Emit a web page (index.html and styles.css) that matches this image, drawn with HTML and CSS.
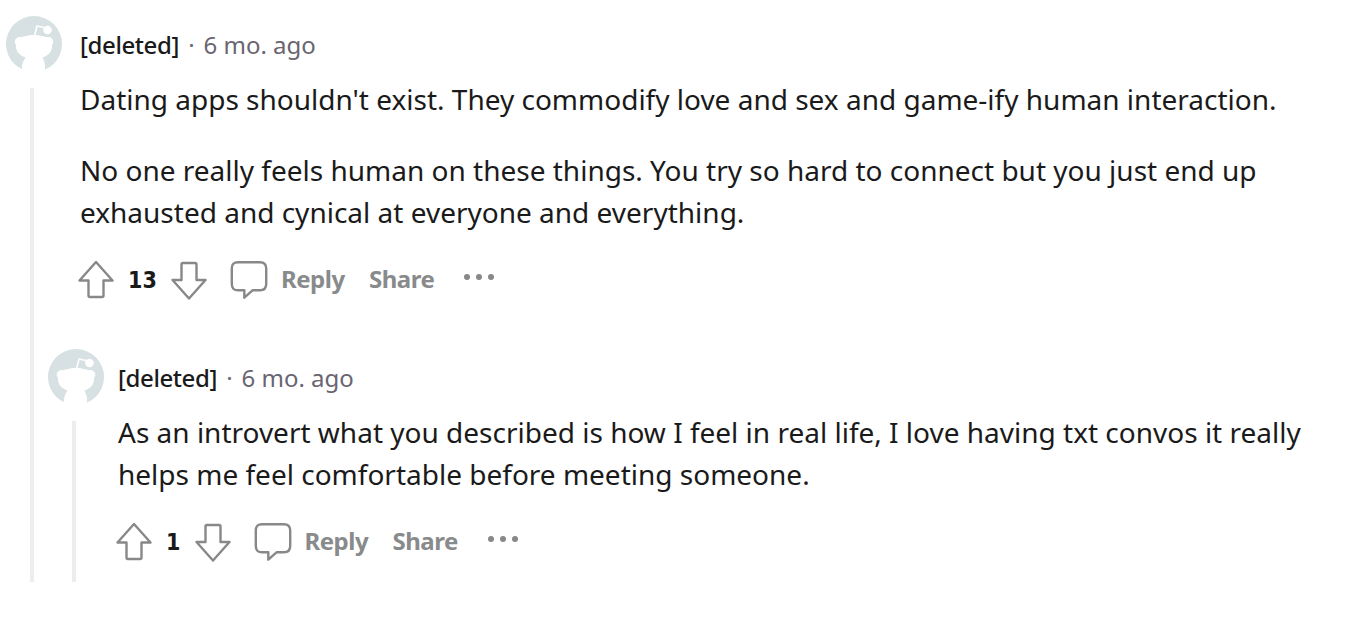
FILE: index.html
```html
<!DOCTYPE html>
<html lang="en">
<head>
    <meta charset="UTF-8">
    <meta name="viewport" content="width=device-width, initial-scale=1.0">
    <title>Comments</title>
    <link rel="stylesheet" href="styles.css">
</head>
<body>
    <!-- Shared icons -->
    <svg class="icon-defs" width="0" height="0">
        <symbol id="avatar" viewBox="0 0 56 56">
            <circle cx="28" cy="28" r="28" fill="#d7e0e2"/>
            <ellipse cx="28" cy="31" rx="18" ry="12" fill="#fff"/>
            <circle cx="13.500" cy="25.800" r="4.800" fill="#fff"/>
            <circle cx="42.500" cy="25.800" r="4.800" fill="#fff"/>
            <path d="M13 22C18 20 22 19.500 28 19.500S38 20 43 22V28H13Z" fill="#fff"/>
            <path d="M16 56V51C16 47 18 43 21 40H35C38 43 39 47 39 51V56Z" fill="#fff"/>
            <path d="M28.500 20L31 10L38 11.500" fill="none" stroke="#fff" stroke-width="1.600" stroke-linejoin="round"/>
            <circle cx="41.500" cy="14" r="4.300" fill="#fff"/>
        </symbol>
        <symbol id="upvote" viewBox="0 0 36 40">
            <path d="M18 2L34.500 20.500H25.500V35.500Q25.500 37 24 37H12Q10.500 37 10.500 35.500V20.500H1.500Z"/>
        </symbol>
        <symbol id="downvote" viewBox="0 0 36 40">
            <path d="M18 38.500L34.500 20H25.500V4.500Q25.500 3 24 3H12Q10.500 3 10.500 4.500V20H1.500Z"/>
        </symbol>
        <symbol id="bubble" viewBox="0 0 38 40">
            <path d="M8 2.200H30Q36.200 2.200 36.200 8.500V24Q36.200 30.300 30 30.300H22.500L14.300 37.700V30.300H8Q1.800 30.300 1.800 24V8.500Q1.800 2.200 8 2.200Z"/>
        </symbol>
        <symbol id="dots" viewBox="0 0 32 8">
            <circle cx="4" cy="4" r="3"/>
            <circle cx="16" cy="4" r="3"/>
            <circle cx="28" cy="4" r="3"/>
        </symbol>
    </svg>

    <div class="thread">
        <div class="comment">
            <div class="rail">
                <svg class="avatar"><use href="#avatar"/></svg>
                <div class="line"></div>
            </div>
            <div class="content">
                <div class="meta">
                    <span class="author">[deleted]</span>
                    <span class="dot">·</span>
                    <span class="time">6 mo. ago</span>
                </div>
                <div class="text">
                    <p>Dating apps shouldn't exist. They commodify love and sex and game-ify human interaction.</p>
                    <p>No one really feels human on these things. You try so hard to connect but you just end up exhausted and cynical at everyone and everything.</p>
                </div>
                <div class="actions">
                    <svg class="icon arrow"><use href="#upvote"/></svg>
                    <span class="score">13</span>
                    <svg class="icon arrow"><use href="#downvote"/></svg>
                    <svg class="icon bubble"><use href="#bubble"/></svg>
                    <span class="action reply">Reply</span>
                    <span class="action share">Share</span>
                    <svg class="dots"><use href="#dots"/></svg>
                </div>

                <div class="comment nested">
                    <div class="rail">
                        <svg class="avatar"><use href="#avatar"/></svg>
                        <div class="line"></div>
                    </div>
                    <div class="content">
                        <div class="meta">
                            <span class="author">[deleted]</span>
                            <span class="dot">·</span>
                            <span class="time">6 mo. ago</span>
                        </div>
                        <div class="text">
                            <p>As an introvert what you described is how I feel in real life, I love having txt convos it really helps me feel comfortable before meeting someone.</p>
                        </div>
                        <div class="actions">
                            <svg class="icon arrow"><use href="#upvote"/></svg>
                            <span class="score single">1</span>
                            <svg class="icon arrow"><use href="#downvote"/></svg>
                            <svg class="icon bubble"><use href="#bubble"/></svg>
                            <span class="action reply">Reply</span>
                            <span class="action share">Share</span>
                            <svg class="dots"><use href="#dots"/></svg>
                        </div>
                    </div>
                </div>
            </div>
        </div>
    </div>
</body>
</html>
```
FILE: styles.css
```css
body {
    margin: 0;
    background: #fff;
    color: #1a1a1b;
    font-family: "Noto Sans", sans-serif;
}
.icon-defs {
    display: block;
}
.thread {
    padding: 16px 40px 0 6px;
}
.comment {
    display: flex;
    gap: 18px;
}
.rail {
    display: flex;
    flex-direction: column;
    flex: 0 0 56px;
    gap: 16px;
}
.avatar {
    width: 56px;
    height: 56px;
}
.line {
    flex: 1;
    width: 4px;
    margin-left: 24px;
    background: #ededed;
}
.content {
    flex: 1;
    min-width: 0;
}
.meta {
    display: flex;
    align-items: center;
    height: 58px;
    margin-bottom: 4px;
    font-size: 24px;
    line-height: 58px;
    white-space: nowrap;
}
.author {
    width: 99px;
    font-weight: 500;
    letter-spacing: -0.4px;
}
.dot {
    width: 25px;
    text-align: center;
    color: #6a6a70;
}
.time {
    margin-left: -0.5px;
    color: #6a6570;
}
.text {
    font-size: 28px;
    line-height: 42px;
}
.text p {
    margin: 0 0 29px;
}
.text p:last-child {
    margin-bottom: 0;
}
.actions {
    display: flex;
    align-items: center;
    height: 40px;
    margin-top: 27px;
    margin-left: -2px;
    font-size: 24px;
    font-weight: 700;
    line-height: 38px;
}
.icon {
    height: 40px;
    fill: none;
    stroke: #888;
    stroke-width: 2.4;
    stroke-linejoin: round;
}
.arrow {
    width: 36px;
}
.bubble {
    width: 38px;
    margin-left: 23px;
}
.score {
    width: 28px;
    margin: 0 15px 1px 14px;
    font-family: "DejaVu Sans Condensed", "DejaVu Sans", sans-serif;
    font-size: 23px;
    font-stretch: condensed;
}
.single {
    width: 14px;
    margin-right: 14.5px;
}
.action {
    margin-bottom: 2px;
    color: #888a8b;
    letter-spacing: -0.5px;
}
.reply {
    width: 63px;
    margin-left: 13px;
}
.share {
    width: 66px;
    margin-left: 25px;
}
.dots {
    width: 32px;
    height: 8px;
    margin-left: 28px;
    margin-bottom: 6px;
    fill: #888;
}
.nested {
    gap: 14px;
    margin-top: 49px;
    margin-left: -32px;
    margin-right: -14px;
}
.nested > .content {
    padding-bottom: 20px;
}
```
